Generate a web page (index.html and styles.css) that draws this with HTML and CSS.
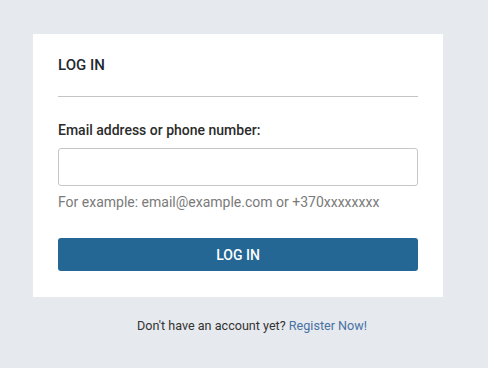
FILE: index.html
```html
<!DOCTYPE html>
<html>
<head>
<meta charset="utf-8">
<link rel="stylesheet" href="styles.css">
</head>
<body>
<div class="page">
  <div class="card">
    <h1 class="title">LOG IN</h1>
    <div class="divider"></div>
    <label class="label" for="email">Email address or phone number:</label>
    <input class="input" id="email" type="text">
    <div class="hint">For example: email@example.com or +370xxxxxxxx</div>
    <button class="btn">LOG IN</button>
  </div>
  <div class="footer">Don't have an account yet? <a class="link" href="#">Register Now!</a></div>
</div>
</body>
</html>
```
FILE: styles.css
```css
html, body {
  margin: 0;
  padding: 0;
  background: #e6e9ed;
  font-family: Roboto, "Noto Sans", sans-serif;
}
.page {
  padding-top: 34px;
  padding-left: 33px;
  width: 410px;
}
.card {
  background: #ffffff;
  width: 410px;
  box-sizing: border-box;
  padding: 21px 25px 26px 25px;
  display: flex;
  flex-direction: column;
}
.title {
  margin: 0;
  font-size: 15px;
  font-weight: 500;
  color: #1f2a30;
  line-height: 20px;
}
.divider {
  height: 1px;
  background: #c4c4c4;
  margin-top: 21px;
}
.label {
  margin-top: 24px;
  font-size: 14px;
  font-weight: 500;
  color: #2b2b2b;
  line-height: 18px;
}
.input {
  margin-top: 9px;
  height: 38px;
  box-sizing: border-box;
  border: 1px solid #c6c6c6;
  border-radius: 3px;
  padding: 0 10px;
  font-size: 14px;
}
.hint {
  margin-top: 7px;
  font-size: 14px;
  color: #7a7a7a;
  line-height: 18px;
}
.btn {
  margin-top: 27px;
  height: 33px;
  border: none;
  border-radius: 3px;
  background: #246794;
  color: #ffffff;
  font-family: Roboto, sans-serif;
  font-size: 14px;
  font-weight: 500;
}
.footer {
  margin-top: 21px;
  text-align: center;
  font-size: 12.6px;
  color: #333333;
  padding-left: 28px;
  line-height: 16px;
}
.link {
  color: #4672a4;
  text-decoration: none;
}
```
